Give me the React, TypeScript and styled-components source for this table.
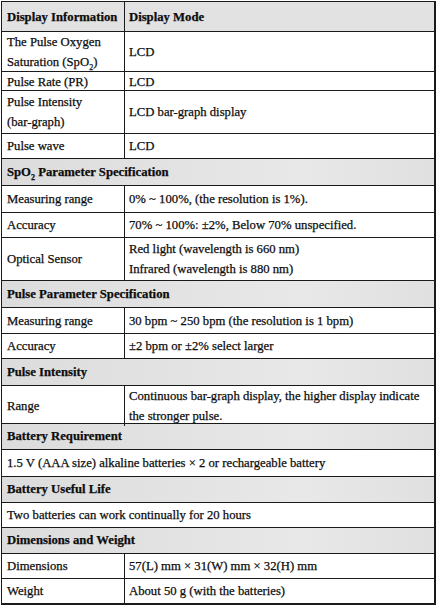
import React from 'react';
import styled, { createGlobalStyle } from 'styled-components';

const Global = createGlobalStyle`
  html, body {
    margin: 0;
    padding: 0;
    background: #fff;
  }
  body {
    font-family: "Liberation Serif", "Times New Roman", serif;
    color: #0d0d0d;
    -webkit-text-stroke: 0.25px #0d0d0d;
  }
`;

const Sheet = styled.div`
  margin: 1px 0 0 1px;
  width: 435px;
  border: 1px solid #1a1a1a;
  border-width: 1px 2px 2px 1px;
  box-sizing: border-box;
`;

const Row = styled.div<{ $h: number; $head?: boolean }>`
  display: grid;
  grid-template-columns: 122px 1fr;
  height: ${p => p.$h}px;
  border-top: ${p => (p.$head ? '0' : '1px solid #1a1a1a')};
  box-sizing: border-box;
  background: ${p => (p.$head ? '#e2e2e2' : '#fff')};
`;

const Cell = styled.div<{ $bold?: boolean }>`
  display: flex;
  flex-direction: column;
  justify-content: center;
  padding: 0 5px;
  font-size: 12.7px;
  line-height: 20px;
  font-weight: ${p => (p.$bold ? 700 : 400)};
  white-space: nowrap;
  & + & {
    border-left: 1px solid #1a1a1a;
    padding-left: 4px;
  }
`;

const Band = styled.div<{ $h: number; $section?: boolean }>`
  display: flex;
  align-items: center;
  height: ${p => p.$h}px;
  box-sizing: border-box;
  padding: 0 5px;
  border-top: 1px solid #1a1a1a;
  background: ${p => (p.$section ? 'linear-gradient(90deg, #dcdcdc, #e8e8e8 70%, #e0e0e0)' : '#fff')};
  font-size: 12.7px;
  font-weight: ${p => (p.$section ? 700 : 400)};
  white-space: nowrap;
`;

const Sub = styled.sub`
  font-size: 8px;
  line-height: 0;
`;

type Pair = { k: React.ReactNode; v: React.ReactNode; h: number };

const Pairs = ({ rows }: { rows: Pair[] }) => (
  <>
    {rows.map((r, i) => (
      <Row key={i} $h={r.h}>
        <Cell>{r.k}</Cell>
        <Cell>{r.v}</Cell>
      </Row>
    ))}
  </>
);

const SpO2 = () => (
  <span>
    SpO<Sub>2</Sub>
  </span>
);

export default function App() {
  return (
    <>
      <Global />
      <Sheet>
        <Row $head $h={29}>
          <Cell $bold>Display Information</Cell>
          <Cell $bold>Display Mode</Cell>
        </Row>
        <Pairs
          rows={[
            {
              k: (
                <>
                  <span>The Pulse Oxygen</span>
                  <span>
                    Saturation (<SpO2 />)
                  </span>
                </>
              ),
              v: 'LCD',
              h: 40,
            },
            { k: 'Pulse Rate (PR)', v: 'LCD', h: 19 },
            {
              k: (
                <>
                  <span>Pulse Intensity</span>
                  <span>(bar-graph)</span>
                </>
              ),
              v: 'LCD bar-graph display',
              h: 43,
            },
            { k: 'Pulse wave', v: 'LCD', h: 25 },
          ]}
        />
        <Band $section $h={27}>
          <span>
            SpO<Sub>2</Sub> Parameter Specification
          </span>
        </Band>
        <Pairs
          rows={[
            { k: 'Measuring range', v: '0% ~ 100%, (the resolution is 1%).', h: 27 },
            { k: 'Accuracy', v: '70% ~ 100%: ±2%, Below 70% unspecified.', h: 25 },
            {
              k: 'Optical Sensor',
              v: (
                <>
                  <span>Red light (wavelength is 660 nm)</span>
                  <span>Infrared (wavelength is 880 nm)</span>
                </>
              ),
              h: 43,
            },
          ]}
        />
        <Band $section $h={27}>Pulse Parameter Specification</Band>
        <Pairs
          rows={[
            { k: 'Measuring range', v: '30 bpm ~ 250 bpm (the resolution is 1 bpm)', h: 26 },
            { k: 'Accuracy', v: '±2 bpm or ±2% select larger', h: 25 },
          ]}
        />
        <Band $section $h={27}>Pulse Intensity</Band>
        <Pairs
          rows={[
            {
              k: 'Range',
              v: (
                <>
                  <span>Continuous bar-graph display, the higher display indicate</span>
                  <span>the stronger pulse.</span>
                </>
              ),
              h: 38,
            },
          ]}
        />
        <Band $section $h={26}>Battery Requirement</Band>
        <Band $h={27}>1.5 V (AAA size) alkaline batteries × 2 or rechargeable battery</Band>
        <Band $section $h={26}>Battery Useful Life</Band>
        <Band $h={25}>Two batteries can work continually for 20 hours</Band>
        <Band $section $h={26}>Dimensions and Weight</Band>
        <Pairs
          rows={[
            { k: 'Dimensions', v: '57(L) mm × 31(W) mm × 32(H) mm', h: 25 },
            { k: 'Weight', v: 'About 50 g (with the batteries)', h: 25 },
          ]}
        />
      </Sheet>
    </>
  );
}
